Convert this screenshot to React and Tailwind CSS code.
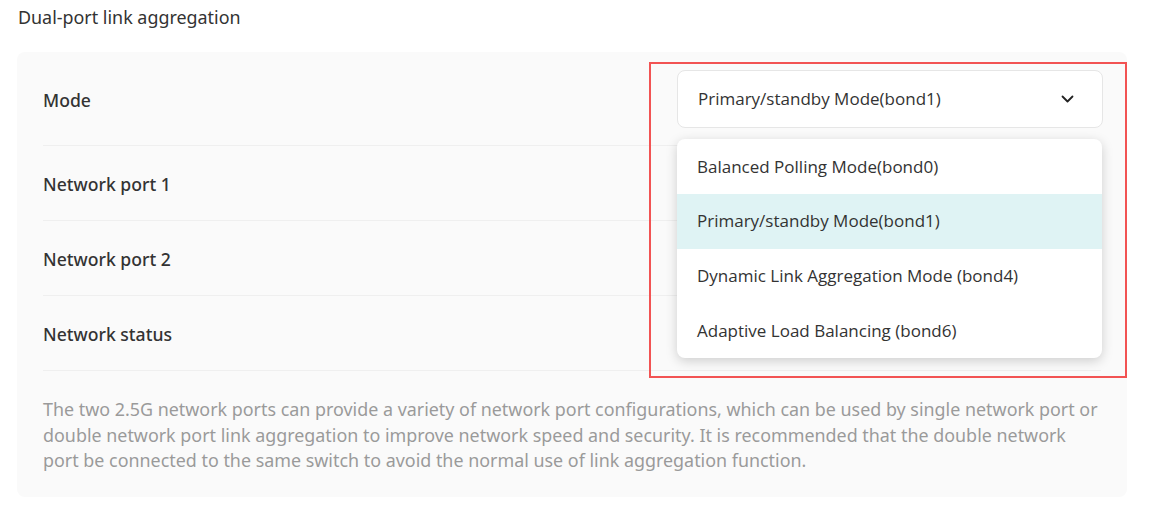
import React from "react";

const options = [
  "Balanced Polling Mode(bond0)",
  "Primary/standby Mode(bond1)",
  "Dynamic Link Aggregation Mode (bond4)",
  "Adaptive Load Balancing (bond6)",
];

export default function App() {
  return (
    <div className="w-[1150px] h-[510px] bg-white relative overflow-hidden" style={{ fontFamily: '"Noto Sans", sans-serif' }}>
      <div className="pl-[18px] pt-[4px] h-[52px] text-[17.9px] text-[#333] leading-[26px]">Dual-port link aggregation</div>
      <div className="mx-[17px] w-[1110px] h-[445px] bg-[#fafafa] rounded-[8px] px-[26px] flex flex-col">
        <div className="h-[94px] flex items-center justify-between border-b border-[#efefef]">
          <span className="text-[17.6px] text-[#333] font-medium mt-[3px]">Mode</span>
          <div className="w-[426px] h-[58px] mr-[-2px] bg-white border border-[#e6e6e6] rounded-[8px] flex items-center justify-between pl-[20px] pr-[28px]">
            <span className="text-[17px] text-[#333]" style={{ fontFamily: '"Open Sans", sans-serif' }}>Primary/standby Mode(bond1)</span>
            <svg width="13" height="8" viewBox="0 0 13 8" fill="none"><path d="M1.5 1.5 L6.5 6.5 L11.5 1.5" stroke="#222" strokeWidth="1.8" strokeLinecap="round" strokeLinejoin="round" /></svg>
          </div>
        </div>
        {["Network port 1", "Network port 2", "Network status"].map((l) => (
          <div key={l} className="h-[75px] flex items-center border-b border-[#efefef]">
            <span className="text-[17.6px] text-[#333] font-medium mt-[2px]">{l}</span>
          </div>
        ))}
        <p className="pt-[26px] text-[17.9px] leading-[25.5px] text-[#9a9a9a] whitespace-nowrap">
          The two 2.5G network ports can provide a variety of network port configurations, which can be used by single network port or<br />
          double network port link aggregation to improve network speed and security. It is recommended that the double network<br />
          port be connected to the same switch to avoid the normal use of link aggregation function.
        </p>
      </div>

      <div className="absolute left-[677px] top-[139px] w-[425px] h-[219px] bg-white rounded-[8px] shadow-[0_3px_12px_rgba(0,0,0,0.18)] overflow-hidden flex flex-col" style={{ fontFamily: '"Open Sans", sans-serif' }}>
        {options.map((o, i) => (
          <div key={o} className={`h-[55px] flex items-center pl-[20px] text-[17px] text-[#333] ${i === 1 ? "bg-[#dff3f4]" : ""}`}>{o}</div>
        ))}
      </div>

      <div className="absolute left-[649px] top-[62px] w-[478px] h-[316px] border-2 border-[#f25353]" />
    </div>
  );
}
